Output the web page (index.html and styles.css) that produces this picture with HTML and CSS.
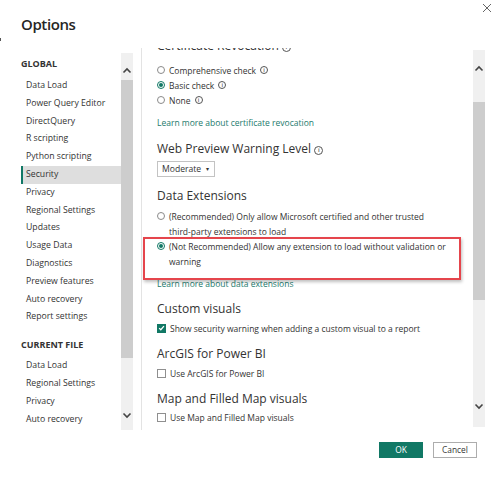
FILE: index.html
```html
<!DOCTYPE html>
<html>
<head>
<meta charset="utf-8">
<link rel="stylesheet" href="styles.css">
</head>
<body>
<div class="dialog">
  <div class="mark"></div>
  <header class="header">
    <h1 class="title">Options</h1>
    <svg class="close" width="10" height="10" viewBox="0 0 10 10"><path d="M1 1L9 9M9 1L1 9" stroke="#666" stroke-width="1"/></svg>
  </header>
  <div class="main">
    <nav class="nav">
      <div class="navlist">
        <div class="group">GLOBAL</div>
        <div class="item">Data Load</div>
        <div class="item">Power Query Editor</div>
        <div class="item">DirectQuery</div>
        <div class="item">R scripting</div>
        <div class="item">Python scripting</div>
        <div class="item selected">Security</div>
        <div class="item">Privacy</div>
        <div class="item">Regional Settings</div>
        <div class="item">Updates</div>
        <div class="item">Usage Data</div>
        <div class="item">Diagnostics</div>
        <div class="item">Preview features</div>
        <div class="item">Auto recovery</div>
        <div class="item">Report settings</div>
        <div class="group group2">CURRENT FILE</div>
        <div class="item">Data Load</div>
        <div class="item">Regional Settings</div>
        <div class="item">Privacy</div>
        <div class="item">Auto recovery</div>
      </div>
      <div class="scroll nav-scroll">
        <svg class="arrow up" width="10" height="7" viewBox="0 0 10 7"><path d="M1.5 5.5L5 2L8.5 5.5" fill="none" stroke="#444" stroke-width="1.6"/></svg>
        <div class="thumb nav-thumb"></div>
        <svg class="arrow down" width="10" height="7" viewBox="0 0 10 7"><path d="M1.5 1.5L5 5L8.5 1.5" fill="none" stroke="#444" stroke-width="1.6"/></svg>
      </div>
    </nav>
    <div class="sep"></div>
    <section class="content">
      <div class="inner">
        <h2 class="heading first">Certificate Revocation <span class="info">i</span></h2>
        <div class="opt"><span class="radio"></span>Comprehensive check <span class="info sm">i</span></div>
        <div class="opt"><span class="radio on"></span>Basic check <span class="info sm">i</span></div>
        <div class="opt"><span class="radio"></span>None <span class="info sm">i</span></div>
        <div class="link l1">Learn more about certificate revocation</div>
        <h2 class="heading h-web">Web Preview Warning Level <span class="info">i</span></h2>
        <div class="select">Moderate <span class="caret">▾</span></div>
        <h2 class="heading h-ext">Data Extensions</h2>
        <div class="opt wrap"><span class="radio"></span><span>(Recommended) Only allow Microsoft certified and other trusted<br>third-party extensions to load</span></div>
        <div class="opt wrap"><span class="radio on"></span><span>(Not Recommended) Allow any extension to load without validation or<br>warning</span></div>
        <div class="link l2">Learn more about data extensions</div>
        <h2 class="heading h-sec">Custom visuals</h2>
        <div class="opt chk"><span class="box on"><svg width="8" height="8" viewBox="0 0 8 8"><path d="M1.3 4.2L3.2 6L6.8 1.8" fill="none" stroke="#fff" stroke-width="1.4"/></svg></span>Show security warning when adding a custom visual to a report</div>
        <h2 class="heading h-sec">ArcGIS for Power BI</h2>
        <div class="opt chk"><span class="box"></span>Use ArcGIS for Power BI</div>
        <h2 class="heading h-sec h-map">Map and Filled Map visuals</h2>
        <div class="opt chk"><span class="box"></span>Use Map and Filled Map visuals</div>
      </div>
      <div class="scroll content-scroll">
        <svg class="arrow up" width="10" height="7" viewBox="0 0 10 7"><path d="M1.5 5.5L5 2L8.5 5.5" fill="none" stroke="#444" stroke-width="1.6"/></svg>
        <div class="thumb content-thumb"></div>
        <svg class="arrow down" width="10" height="7" viewBox="0 0 10 7"><path d="M1.5 1.5L5 5L8.5 1.5" fill="none" stroke="#444" stroke-width="1.6"/></svg>
      </div>
    </section>
  </div>
  <footer class="footer">
    <button class="btn ok">OK</button>
    <button class="btn cancel">Cancel</button>
  </footer>
  <div class="highlight"></div>
</div>
</body>
</html>
```

FILE: styles.css
```css
* { box-sizing: border-box; }
html, body { margin: 0; padding: 0; }
body {
  width: 500px;
  height: 481px;
  background: #fff;
  font-family: "Open Sans", "Noto Sans", sans-serif;
  color: #333;
  overflow: hidden;
}
.dialog {
  position: relative;
  width: 500px;
  height: 481px;
}
.mark {
  position: absolute;
  left: 0;
  top: 38px;
  width: 1px;
  height: 3px;
  background: #555;
}
.header {
  display: flex;
  justify-content: space-between;
  align-items: flex-start;
  height: 48px;
  padding: 0 8px 0 21px;
}
.title {
  margin: 13px 0 0 0;
  font-size: 15px;
  font-weight: 600;
  color: #252525;
  line-height: 22px;
  letter-spacing: -0.4px;
}
.close { margin-top: 3px; margin-right: 0; }

.main {
  display: flex;
  height: 382px;
}
.nav {
  display: flex;
  padding-left: 21px;
  width: 133px;
}
.navlist {
  width: 100px;
  padding-top: 8px;
}
.group {
  font-size: 9px;
  font-weight: 700;
  color: #333;
  line-height: 16px;
  margin-bottom: 5px;
}
.group2 { margin-top: 11px; margin-bottom: 4px; }
.item {
  font-size: 8.7px;
  line-height: 17.8px;
  height: 17.8px;
  padding-left: 5px;
  color: #333;
  white-space: nowrap;
}
.item.selected {
  background: #dedede;
  border-left: 2px solid #117865;
  padding-left: 3px;
}
.scroll {
  width: 12px;
  background: #f0f0f0;
  display: flex;
  flex-direction: column;
  align-items: center;
  position: relative;
}
.nav-scroll {
  margin-top: 5px;
  height: 377px;
}
.arrow { flex: none; }
.nav-scroll .up { margin-top: 14px; }
.nav-thumb {
  width: 12px;
  background: #cdcdcd;
  margin-top: 6px;
  height: 278px;
}
.nav-scroll .down { margin-top: 54px; }

.sep {
  width: 1px;
  background: #e3e3e3;
  margin-left: 8px;
  height: 382px;
}
.content {
  flex: 1;
  display: flex;
  overflow: hidden;
  height: 382px;
}
.inner {
  flex: 1;
  padding-left: 15px;
  overflow: hidden;
}
.heading {
  font-size: 12px;
  font-weight: 400;
  color: #333;
  line-height: 20px;
  margin: 0;
  white-space: nowrap;
}
.heading.first { margin-top: -12px; margin-bottom: 0; }
.info {
  display: inline-block;
  width: 9px;
  height: 9px;
  border: 1px solid #555;
  border-radius: 50%;
  font-size: 6px;
  line-height: 7px;
  text-align: center;
  vertical-align: 1px;
  color: #555;
  font-weight: 600;
}
.info.sm { width: 8px; height: 8px; line-height: 6px; font-size: 5.5px; vertical-align: 0; }
.opt {
  display: flex;
  align-items: center;
  font-size: 8.5px;
  line-height: 15px;
  color: #333;
  white-space: nowrap;
  gap: 3px;
}
.opt .info { margin-left: 1px; }
.heading.first + .opt { margin-top: 6.5px; }
.opt.wrap { align-items: flex-start; }
.opt.wrap .radio { margin-top: 3px; }
.radio {
  flex: none;
  width: 8px;
  height: 8px;
  border: 1px solid #8a8a8a;
  border-radius: 50%;
  margin-right: 1px;
  position: relative;
}
.radio.on {
  border-color: #117865;
  background: #fff;
}
.radio.on::after {
  content: "";
  position: absolute;
  left: 1px;
  top: 1px;
  width: 4px;
  height: 4px;
  border-radius: 50%;
  background: #117865;
}
.link {
  font-size: 8.5px;
  line-height: 15px;
  color: #1d7a6d;
  white-space: nowrap;
}
.l1 { margin-top: 7px; }
.l2 { margin-top: 7px; }
.h-web { margin-top: 9px; }
.select {
  margin-top: 2px;
  width: 58px;
  height: 16px;
  border: 1px solid #c3c3c3;
  font-size: 8.6px;
  line-height: 14px;
  padding-left: 4px;
  color: #333;
}
.caret { font-size: 6px; margin-left: 3px; vertical-align: 1px; }
.h-ext { margin-top: 9.5px; margin-bottom: 2.5px; }
.h-sec { margin-top: 8.5px; margin-bottom: 1.5px; }
.h-map { margin-top: 8px; }
.chk { gap: 3px; }
.box {
  flex: none;
  width: 9px;
  height: 9px;
  border: 1px solid #8f8f8f;
  background: #fff;
  display: flex;
  align-items: center;
  justify-content: center;
  margin-right: 1px;
}
.box.on { background: #117865; border-color: #117865; }

.content-scroll {
  flex: none;
  margin-right: 15px;
  margin-top: 2px;
  height: 377px;
}
.content-scroll .up { margin-top: 15px; }
.content-thumb {
  width: 12px;
  background: #cdcdcd;
  margin-top: 30px;
  height: 198px;
}
.content-scroll .down { margin-top: 103px; }

.footer {
  display: flex;
  justify-content: flex-end;
  gap: 10px;
  padding-right: 23px;
  margin-top: 12px;
}
.btn {
  width: 44px;
  height: 16px;
  font-family: "Open Sans", "Noto Sans", sans-serif;
  font-size: 8.4px;
  padding: 0;
  border-radius: 0;
  line-height: 14px;
}
.ok {
  background: #117865;
  border: 1px solid #117865;
  color: #fff;
}
.cancel {
  background: #fff;
  border: 1px solid #adadad;
  color: #333;
}
.highlight {
  position: absolute;
  left: 143px;
  top: 237px;
  width: 318px;
  height: 43px;
  border: 2px solid #e5454c;
  box-shadow: 1px 2px 3px rgba(0,0,0,0.25);
  pointer-events: none;
}
```
